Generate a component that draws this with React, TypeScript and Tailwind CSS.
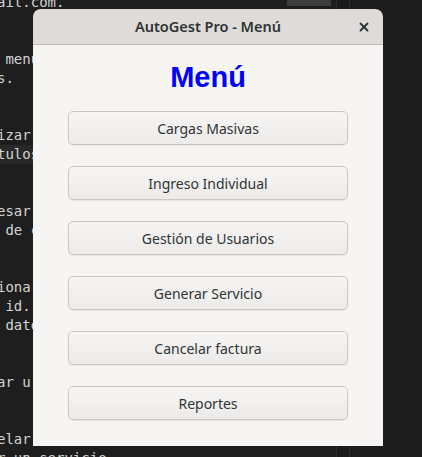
import { X } from 'lucide-react'

const editorLines = [
  'ail.com.',
  '',
  '',
  ' menú',
  's.',
  '',
  '',
  'izar',
  'tulos',
  '',
  '',
  'esar',
  ' de c',
  '',
  '',
  'ionar',
  ' id.',
  ' dato',
  '',
  '',
  'ar u',
  '',
  '',
  'elar',
  'r un servicio',
]

const options = [
  'Cargas Masivas',
  'Ingreso Individual',
  'Gestión de Usuarios',
  'Generar Servicio',
  'Cancelar factura',
  'Reportes',
]

export default function App() {
  return (
    <div className="relative w-[422px] h-[457px] overflow-hidden bg-[#1e1e1e]">
      {/* editor behind the dialog */}
      <div className="flex h-full">
        <div className="w-[336px] -mt-[7px] font-['DejaVu_Sans_Mono',monospace] text-[14px] leading-[19px] text-[#d4d4d4]">
          {editorLines.map((line, i) => (
            <div
              key={i}
              className={`h-[19px] whitespace-pre -ml-[3px] ${i === 8 ? 'bg-[#282828]' : ''}`}
            >
              {line}
            </div>
          ))}
        </div>
        <div className="w-[13px] border-l border-[#2c2c2c] bg-[#1b1b1b]" />
        <div className="flex-1 border-l border-[#2c2c2c] bg-[#1c1c1c]" />
      </div>
      <div className="absolute left-[287px] top-0 w-[44px] h-[6px] bg-[#4a4a4a] opacity-70" />

      {/* dialog window */}
      <div className="absolute left-[33px] top-[9px] w-[350px] h-[437px] flex flex-col rounded-t-[8px] overflow-hidden">
        <div className="relative h-[36px] flex items-center justify-center bg-[#dedbd8] border-b border-[#c0bbb6]">
          <span className="font-['Noto_Sans',sans-serif] font-semibold text-[14.5px] text-[#2e3436]">
            AutoGest Pro - Menú
          </span>
          <X className="absolute right-[12px] top-[11px] text-[#2e3436]" size={14} strokeWidth={3.2} />
        </div>
        <div className="flex-1 flex flex-col items-center bg-[#f6f5f4] px-[35px] pt-[15px]">
          <h1 className="font-['Liberation_Sans',Arial,sans-serif] font-bold text-[29px] leading-[34px] text-[#0000ff]">
            Menú
          </h1>
          <div className="mt-[17px] w-full flex flex-col gap-[21px]">
            {options.map((label) => (
              <button
                key={label}
                className="h-[34px] w-full rounded-[5px] border border-[#cdc7c2] bg-gradient-to-b from-[#f6f5f4] to-[#edebe9] shadow-[0_1px_1px_rgba(0,0,0,0.07)] font-['Noto_Sans',sans-serif] text-[14px] text-[#2e3436]"
              >
                {label}
              </button>
            ))}
          </div>
        </div>
      </div>
    </div>
  )
}
